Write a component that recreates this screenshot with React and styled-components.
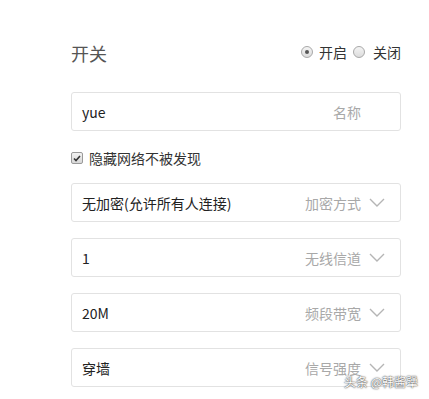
import styled, { createGlobalStyle } from "styled-components";

const GlobalStyle = createGlobalStyle`
    html, body {
        margin: 0;
        padding: 0;
        background: #fff;
    }
    body {
        font-family: "Microsoft YaHei", "Noto Sans CJK SC", "Liberation Sans", sans-serif;
    }
`;

const fields = [
    { value: "yue", label: "名称", select: false },
    { value: "无加密(允许所有人连接)", label: "加密方式", select: true },
    { value: "1", label: "无线信道", select: true },
    { value: "20M", label: "频段带宽", select: true },
    { value: "穿墙", label: "信号强度", select: true },
];

const Chevron = () => (
    <svg width="16" height="9" viewBox="0 0 16 9" fill="none">
        <path d="M1 1l7 7 7-7" stroke="#b5b5b5" strokeWidth="1.4" />
    </svg>
);

const App = () => {
    return (
        <Page>
            <GlobalStyle />
            <Header>
                <Title>开关</Title>
                <RadioGroup>
                    <RadioDot $checked />
                    <span>开启</span>
                    <RadioDot />
                    <span>关闭</span>
                </RadioGroup>
            </Header>

            <Field>
                <Value>{fields[0].value}</Value>
                <Label $select={false}>{fields[0].label}</Label>
            </Field>

            <CheckRow>
                <CheckBox>
                    <svg width="8" height="7" viewBox="0 0 8 7">
                        <path d="M1 3.5l2 2L7 1" stroke="#333" strokeWidth="1.6" fill="none" />
                    </svg>
                </CheckBox>
                隐藏网络不被发现
            </CheckRow>

            <List>
                {fields.slice(1).map((f) => (
                    <Field key={f.label}>
                        <Value>{f.value}</Value>
                        <Label $select={f.select}>{f.label}</Label>
                        {f.select && <Chevron />}
                    </Field>
                ))}
            </List>

            <Watermark>头条 @韩酱犟</Watermark>
        </Page>
    );
};

const Page = styled.div`
    position: relative;
    width: 429px;
    height: 399px;
    box-sizing: border-box;
    padding: 36px 28px 0 71px;
    overflow: hidden;
`;

const Header = styled.div`
    display: flex;
    align-items: center;
    justify-content: space-between;
    height: 34px;
    margin-bottom: 22px;
`;

const Title = styled.h1`
    margin: 0;
    font-size: 18px;
    font-weight: normal;
    color: #555;
`;

const RadioGroup = styled.div`
    display: flex;
    align-items: center;
    font-size: 14px;
    color: #333;
    margin-top: -2px;
    span {
        margin: 0 3px 0 3px;
    }
    span:last-child {
        margin-right: 0;
        margin-left: 5px;
    }
`;

const RadioDot = styled.span`
    position: relative;
    width: 10px;
    height: 10px;
    border-radius: 50%;
    border: 1px solid #a8a8a8;
    background: linear-gradient(#f4f4f4, #dcdcdc);
    box-sizing: content-box;
    &::after {
        content: "";
        display: ${(p) => (p.$checked ? "block" : "none")};
        position: absolute;
        left: 3px;
        top: 3px;
        width: 4px;
        height: 4px;
        border-radius: 50%;
        background: #555;
    }
`;

const Field = styled.div`
    display: flex;
    align-items: center;
    height: 39px;
    box-sizing: border-box;
    border: 1px solid #e2e2e2;
    border-radius: 3px;
    padding: 0 15px 0 10px;
    gap: 8px;
`;

const Value = styled.span`
    flex: 1;
    font-size: 14px;
    color: #222;
    white-space: nowrap;
`;

const Label = styled.span`
    font-size: 14px;
    color: #a8a8a8;
    margin-right: ${(p) => (p.$select ? "0" : "24px")};
`;

const CheckRow = styled.label`
    display: flex;
    align-items: center;
    gap: 6px;
    height: 20px;
    margin: 17px 0 15px;
    font-size: 14px;
    color: #333;
`;

const CheckBox = styled.span`
    display: flex;
    align-items: center;
    justify-content: center;
    width: 10px;
    height: 10px;
    border: 1px solid #9a9a9a;
    border-radius: 2px;
    background: linear-gradient(#f2f2f2, #d8d8d8);
`;

const List = styled.div`
    display: flex;
    flex-direction: column;
    gap: 16px;
`;

const Watermark = styled.div`
    position: absolute;
    right: 11px;
    bottom: 9px;
    font-size: 12px;
    color: #fff;
    text-shadow: 0 0 2px #444, 0 0 1px #444;
    white-space: nowrap;
`;

export default App;
